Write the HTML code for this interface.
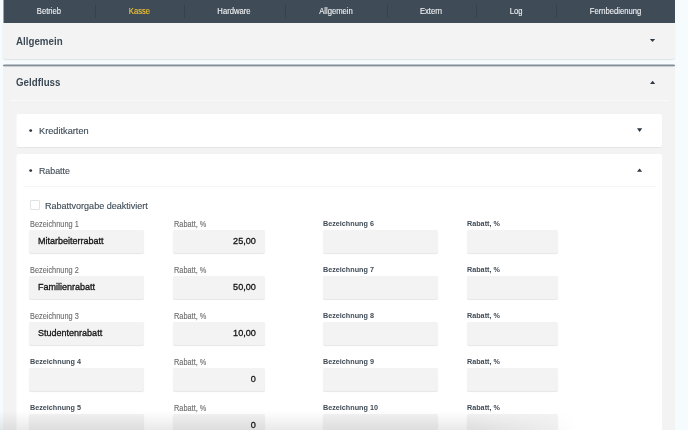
<!DOCTYPE html>
<html><head><meta charset="utf-8">
<style>
*{margin:0;padding:0;box-sizing:border-box}
html,body{width:688px;height:430px;overflow:hidden;background:#f6fbfe;font-family:"Liberation Sans",sans-serif;position:relative}
.abs{position:absolute}
#nav{left:4px;top:0;width:671px;height:23px;background:#3f4c57;box-shadow:-1px 0 0 rgba(63,76,87,0.5)}
.ni{position:absolute;top:0;height:23px;line-height:23px;text-align:center;color:#eff1f3;font-size:8.8px;transform:translateX(-0.8px) scaleX(0.87);-webkit-text-stroke:0.12px currentColor}
.sep{position:absolute;top:4.5px;width:1px;height:13.5px;background:#35414b}
.panel{position:absolute;background:#f3f3f3}
.h{position:absolute;font-weight:bold;color:#3d4a55;font-size:10px;transform:scaleX(0.975);transform-origin:0 0}
.card{position:absolute;background:#fff;border-radius:2px}
.sub{position:absolute;color:#3d4a55;font-size:9.6px;-webkit-text-stroke:0.12px currentColor;transform:scaleX(0.96);transform-origin:0 0}
.lbl{position:absolute;font-size:8.2px;color:#6a6a6a;-webkit-text-stroke:0.1px currentColor;transform:scaleX(0.9);transform-origin:0 0}
.lblb{position:absolute;font-size:7.8px;color:#3f4b56;font-weight:bold;transform:scaleX(0.925);transform-origin:0 0}
.inp{position:absolute;height:23px;background:#f3f3f3;border-radius:2px;box-shadow:0 1px 1px rgba(0,0,0,0.1)}
.val{position:absolute;font-size:9.8px;color:#141414;-webkit-text-stroke:0.32px currentColor;transform:scaleX(0.92);transform-origin:0 0}
.valr{position:absolute;font-size:9.8px;color:#141414;-webkit-text-stroke:0.32px currentColor;transform:scaleX(0.93);transform-origin:100% 0;text-align:right}
</style></head><body>
<div id="wrap" style="position:absolute;left:0;top:0;width:688px;height:430px;will-change:transform">
<div id="nav" class="abs">
  <div class="ni" style="left:0;width:91.5px">Betrieb</div>
  <div class="ni" style="left:91.5px;width:88.5px;color:#f6c42e">Kasse</div>
  <div class="ni" style="left:180px;width:101.5px">Hardware</div>
  <div class="ni" style="left:281.5px;width:101.5px">Allgemein</div>
  <div class="ni" style="left:383px;width:89.5px">Extern</div>
  <div class="ni" style="left:472.5px;width:80px">Log</div>
  <div class="ni" style="left:552.5px;width:118.5px">Fernbedienung</div>
  <div class="sep" style="left:91px"></div>
  <div class="sep" style="left:179.5px"></div>
  <div class="sep" style="left:281px"></div>
  <div class="sep" style="left:382.5px"></div>
  <div class="sep" style="left:472px"></div>
  <div class="sep" style="left:552px"></div>
</div>

<div class="panel" style="left:3px;top:23px;width:672px;height:36px;border-radius:0 0 3px 3px;box-shadow:0 1px 1.5px rgba(0,0,0,0.11)"></div>
<div class="h" style="left:16.4px;top:35.5px">Allgemein</div>

<div class="abs" style="left:3px;top:64px;width:672px;height:3px;background:linear-gradient(to bottom,#bcc3c9 0,#bcc3c9 1px,#848e97 1px,#848e97 2px,#c9ced3 2px,#c9ced3 3px);border-radius:1.5px"></div>
<div class="panel" style="left:3px;top:67px;width:672px;height:363px"></div>
<div class="h" style="left:16.4px;top:77px">Geldfluss</div>
<div class="abs" style="left:10px;top:100px;width:658px;height:1px;background:#fafafa"></div>

<div class="card" style="left:17px;top:114px;width:645px;height:33px;box-shadow:0 1px 1px rgba(0,0,0,0.06),-1px 0 0 rgba(255,255,255,0.5)"></div>
<div class="sub" style="left:39.4px;top:125.2px">Kreditkarten</div>

<div class="card" style="left:17px;top:154px;width:645px;height:300px;box-shadow:-1px 0 0 rgba(255,255,255,0.5)"></div>
<div class="sub" style="left:39.4px;top:164.8px;transform:scaleX(0.92)">Rabatte</div>
<div class="abs" style="left:23px;top:186px;width:633px;height:1px;background:#f5f5f5"></div>

<div class="abs" style="left:30px;top:200px;width:10px;height:10px;border:1px solid #e2e2e2;border-radius:1px;background:#fff"></div>
<div class="sub" style="left:45.1px;top:199.9px;font-size:9.6px;transform:scaleX(0.94)">Rabattvorgabe deaktiviert</div>

<!--G--><div id="grid">
<div class="lbl" style="left:29.5px;top:219.5px">Bezeichnung 1</div>
<div class="inp" style="left:29.3px;top:230px;width:115.2px"></div>
<div class="val" style="left:38.3px;top:235px">Mitarbeiterrabatt</div>
<div class="lbl" style="left:173.7px;top:219.5px">Rabatt, %</div>
<div class="inp" style="left:173px;top:230px;width:91.5px"></div>
<div class="valr" style="left:173.5px;width:81.9px;top:235px">25,00</div>
<div class="lblb" style="left:322.9px;top:218.6px">Bezeichnung 6</div>
<div class="inp" style="left:322.5px;top:230px;width:115.7px"></div>
<div class="lblb" style="left:466.9px;top:218.6px">Rabatt, %</div>
<div class="inp" style="left:466.9px;top:230px;width:91.1px"></div>
<div class="lbl" style="left:29.5px;top:265.5px">Bezeichnung 2</div>
<div class="inp" style="left:29.3px;top:276px;width:115.2px"></div>
<div class="val" style="left:38.3px;top:281px">Familienrabatt</div>
<div class="lbl" style="left:173.7px;top:265.5px">Rabatt, %</div>
<div class="inp" style="left:173px;top:276px;width:91.5px"></div>
<div class="valr" style="left:173.5px;width:81.9px;top:281px">50,00</div>
<div class="lblb" style="left:322.9px;top:264.6px">Bezeichnung 7</div>
<div class="inp" style="left:322.5px;top:276px;width:115.7px"></div>
<div class="lblb" style="left:466.9px;top:264.6px">Rabatt, %</div>
<div class="inp" style="left:466.9px;top:276px;width:91.1px"></div>
<div class="lbl" style="left:29.5px;top:311.5px">Bezeichnung 3</div>
<div class="inp" style="left:29.3px;top:322px;width:115.2px"></div>
<div class="val" style="left:38.3px;top:327px">Studentenrabatt</div>
<div class="lbl" style="left:173.7px;top:311.5px">Rabatt, %</div>
<div class="inp" style="left:173px;top:322px;width:91.5px"></div>
<div class="valr" style="left:173.5px;width:81.9px;top:327px">10,00</div>
<div class="lblb" style="left:322.9px;top:310.6px">Bezeichnung 8</div>
<div class="inp" style="left:322.5px;top:322px;width:115.7px"></div>
<div class="lblb" style="left:466.9px;top:310.6px">Rabatt, %</div>
<div class="inp" style="left:466.9px;top:322px;width:91.1px"></div>
<div class="lblb" style="left:29.5px;top:356.6px">Bezeichnung 4</div>
<div class="inp" style="left:29.3px;top:368px;width:115.2px"></div>
<div class="lbl" style="left:173.7px;top:357.5px">Rabatt, %</div>
<div class="inp" style="left:173px;top:368px;width:91.5px"></div>
<div class="valr" style="left:173.5px;width:81.9px;top:373px">0</div>
<div class="lblb" style="left:322.9px;top:356.6px">Bezeichnung 9</div>
<div class="inp" style="left:322.5px;top:368px;width:115.7px"></div>
<div class="lblb" style="left:466.9px;top:356.6px">Rabatt, %</div>
<div class="inp" style="left:466.9px;top:368px;width:91.1px"></div>
<div class="lblb" style="left:29.5px;top:402.6px">Bezeichnung 5</div>
<div class="inp" style="left:29.3px;top:414px;width:115.2px"></div>
<div class="lbl" style="left:173.7px;top:403.5px">Rabatt, %</div>
<div class="inp" style="left:173px;top:414px;width:91.5px"></div>
<div class="valr" style="left:173.5px;width:81.9px;top:419px">0</div>
<div class="lblb" style="left:322.9px;top:402.6px">Bezeichnung 10</div>
<div class="inp" style="left:322.5px;top:414px;width:115.7px"></div>
<div class="lblb" style="left:466.9px;top:402.6px">Rabatt, %</div>
<div class="inp" style="left:466.9px;top:414px;width:91.1px"></div>
</div><!--/G-->
<svg class="abs" style="left:0;top:0" width="688" height="430" viewBox="0 0 688 430">
<g fill="#2d3945">
<circle cx="30.7" cy="130.6" r="1.45"/>
<circle cx="30.7" cy="170.6" r="1.45"/>
<polygon points="649.9,38.9 655.1,38.9 652.5,42.1"/>
<polygon points="650,84 655.2,84 652.6,80.8"/>
<polygon points="637,128.3 642.2,128.3 639.6,131.9"/>
<polygon points="637,171.8 642.2,171.8 639.6,168.6"/>
</g></svg>
<div class="abs" style="left:0;top:411px;width:688px;height:19px;background:linear-gradient(to bottom,rgba(0,0,0,0),rgba(0,0,0,0.085));-webkit-mask-image:linear-gradient(to right,#000 0,#000 470px,transparent 580px)"></div>
</div>
</body></html>
